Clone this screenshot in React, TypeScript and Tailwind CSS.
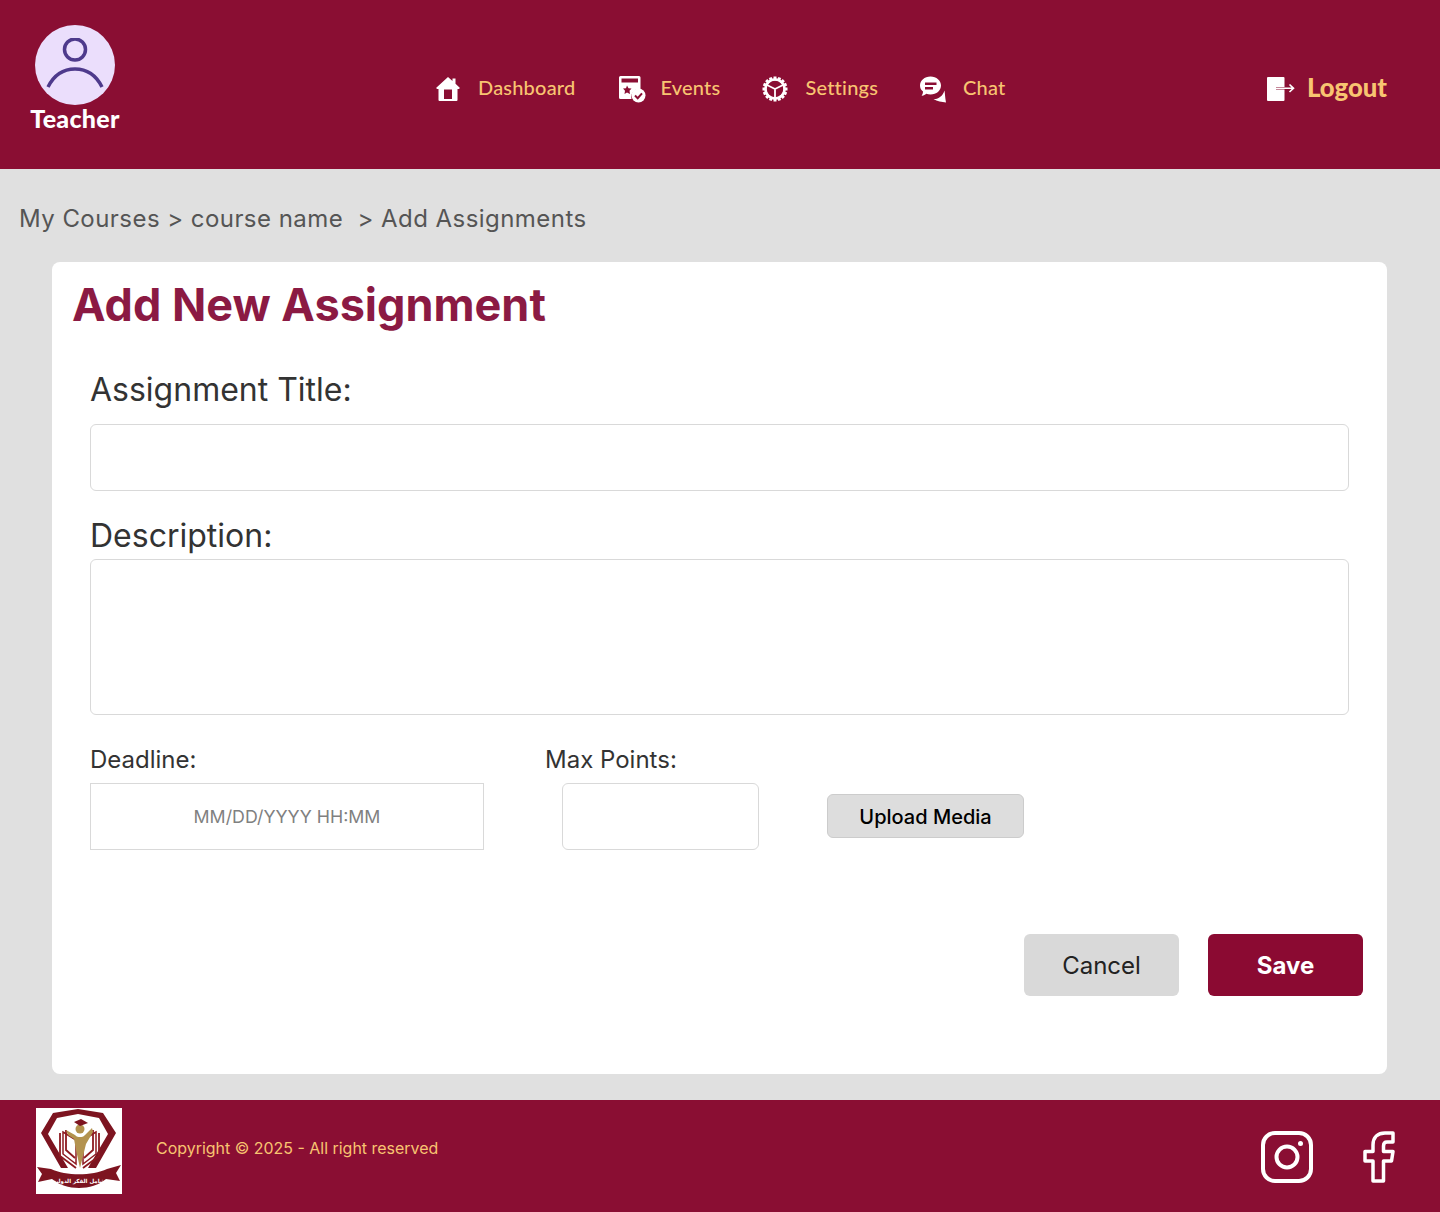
const HomeIcon = () => (
  <svg width="24" height="26" viewBox="0 0 24 26" className="shrink-0">
    <path fill="#fff" fillRule="evenodd" d="M12 1 L16.500 5 V2.500 H19.500 V7.800 L24 12 L22.800 13 H21.500 V24 Q21.500 25 20.500 25 H3.500 Q2.500 25 2.500 24 V13 H1.200 L0 12 Z M8 13.500 V23 H16 V13.500 Z" />
  </svg>
)

const EventsIcon = () => (
  <svg width="27" height="28" viewBox="0 0 27 28" className="shrink-0">
    <path fill="#fff" fillRule="evenodd" d="M1.500 1 H20 Q21.500 1 21.500 2.500 V14 A8 8 0 0 0 12.500 24 H1.500 Q0 24 0 22.500 V2.500 Q0 1 1.500 1 Z M2.500 3.500 V7.500 H19 V3.500 Z" />
    <path fill="#8a0e33" d="M8 10.500 L9.500 13.300 L12.500 13.500 L10.500 15.700 L11 19 L8 17.500 L5.500 19 L6 15.700 L4 13.500 L7 13.300 Z" />
    <circle cx="19.500" cy="20.500" r="7" fill="#fff" />
    <path d="M16 20.500 L18.700 23.200 L23 18.300" fill="none" stroke="#8a0e33" strokeWidth="2" />
  </svg>
)

const SettingsIcon = () => {
  const teeth = Array.from({ length: 16 }, (_, i) => i * 22.5)
  return (
    <svg width="26" height="26" viewBox="0 0 26 26" className="shrink-0">
      {teeth.map((a) => (
        <rect key={a} x="11.500" y="0.500" width="3" height="4" fill="#fff" transform={`rotate(${a} 13 13)`} />
      ))}
      <circle cx="13" cy="13" r="9.500" fill="none" stroke="#fff" strokeWidth="2.500" />
      <path d="M13 13 L5 9 M13 13 L21 9 M13 13 V22" stroke="#fff" strokeWidth="1.800" />
    </svg>
  )
}

const ChatIcon = () => (
  <svg width="27" height="27" viewBox="0 0 27 27" className="shrink-0">
    <path fill="#fff" fillRule="evenodd" d="M10.500 0.500 C16.500 0.500 21 4.500 21 9.500 C21 14.500 16.500 18.500 10.500 18.500 C9 18.500 7.500 18.200 6.200 17.800 C4.800 19 3 20 1.500 19.500 C2.500 18.500 3 17 3 15.500 C1 14 0 12 0 9.500 C0 4.500 4.500 0.500 10.500 0.500 Z M5 6.500 V9 H16.500 V6.500 Z M5 11 V13.500 H13 V11 Z" />
    <path fill="#fff" d="M24.500 14.500 C25 17 25 21 26 26.500 C22 26 17 25.500 13.500 23 C18 23.500 22.500 20.500 24.500 14.500 Z" />
  </svg>
)

const LogoutIcon = () => (
  <svg width="28" height="24" viewBox="0 0 28 24" className="shrink-0">
    <path fill="#fff" d="M0 1 Q0 0 1 0 H16.500 Q17.500 0 17.500 1 V10 H9 V12.500 H17.500 V23 Q17.500 24 16.500 24 H1 Q0 24 0 23 Z" />
    <path d="M9 11.300 H26 M22.500 7.500 L26.500 11.300 L22.500 15" fill="none" stroke="#fff" strokeWidth="1.600" />
  </svg>
)

const InstagramIcon = () => (
  <svg width="52" height="52" viewBox="0 0 52 52">
    <rect x="2" y="2" width="48" height="48" rx="12" fill="none" stroke="#fff" strokeWidth="4" />
    <circle cx="26" cy="26" r="10.500" fill="none" stroke="#fff" strokeWidth="4" />
    <circle cx="39.500" cy="12.500" r="2.500" fill="#fff" />
  </svg>
)

const FacebookIcon = () => (
  <svg width="32" height="52" viewBox="0 0 32 52">
    <path
      d="M10 50 V30 H2 V20.500 H10 V14 C10 6 15 2 22 2 H30 V11 H24 C21.500 11 20.500 12.500 20.500 15 V20.500 H30 L28.500 30 H20.500 V50 Z"
      fill="none"
      stroke="#fff"
      strokeWidth="3.500"
      strokeLinejoin="round"
    />
  </svg>
)

const CrestLogo = () => (
  <svg width="86" height="86" viewBox="0 0 86 86" className="shrink-0 bg-white">
    {/* shield */}
    <path d="M17 5 L42 1 L67 5 L80 25 L60 60 L52 60 L72 26 L63 10 L42 6 L21 10 L12 26 L32 60 L25 60 L5 25 Z" fill="#7d1420" />
    {/* books */}
    <path d="M27 24 L40 32 V56 L27 46 Z M60 24 L47 32 V56 L60 46 Z" fill="#fff" stroke="#8d1a20" strokeWidth="1.500" />
    <path d="M24 25 V48 L40 60 M30 22 V42 L39 50 M63 25 V48 L47 60 M57 22 V42 L48 50" fill="none" stroke="#8d1a20" strokeWidth="1.800" />
    {/* graduate */}
    <path d="M30 22 L39 27 C41 29 42 29 44 29 C46 29 47 29 49 27 L56 20 L57 24 L50 36 L44 60 L40 42 L38 31 L32 27 Z" fill="#b3924e" />
    <circle cx="44" cy="21" r="4.500" fill="#b3924e" />
    <path d="M38 14 L45 11 L52 15 L44 18 Z" fill="#7d1420" />
    {/* ribbon */}
    <path d="M1 59 L15 61 C30 68 56 68 71 61 L85 57 L80 65 L84 73 L70 71 C56 83 30 83 16 71 L2 74 L6 66 Z" fill="#7d1420" />
    <text x="43" y="75" textAnchor="middle" fontSize="5.500" fontWeight="700" fill="#fff" fontFamily="'DejaVu Sans', sans-serif" direction="rtl">
      شامل الفكر الدولية
    </text>
  </svg>
)

const NavLink = ({ icon, label, gap }: { icon: React.ReactNode; label: string; gap: string }) => (
  <a className={`flex items-center ${gap}`}>
    {icon}
    <span className="mb-[4px] font-['Lato',sans-serif] text-[20px] font-medium leading-none tracking-[0.2px] text-[#f8c471]">{label}</span>
  </a>
)

export default function App() {
  return (
    <div className="flex min-h-[1212px] flex-col bg-[#e0e0e0] font-['Inter',sans-serif]">
      <header className="flex h-[169px] shrink-0 items-start bg-[#8a0e33] pl-[30px] pr-[53px]">
        <div className="mt-[25px] flex w-[90px] flex-col items-center">
          <div className="flex h-20 w-20 items-center justify-center rounded-full bg-[#ebdefc]">
            <svg width="58" height="54" viewBox="0 0 58 54">
              <circle cx="29" cy="11.500" r="10.500" fill="none" stroke="#4e3a8c" strokeWidth="3.500" />
              <path d="M2 49 C8 37 18 31 29 31 C40 31 50 37 56 49" fill="none" stroke="#4e3a8c" strokeWidth="3.500" />
            </svg>
          </div>
          <span className="whitespace-nowrap font-['Lato',sans-serif] text-[25px] font-black leading-[27px] tracking-[0.3px] text-white">Teacher</span>
        </div>

        <nav className="ml-[316px] mt-[75px] flex items-center">
          <NavLink icon={<HomeIcon />} label="Dashboard" gap="gap-[18px]" />
          <div className="ml-[44px]"><NavLink icon={<EventsIcon />} label="Events" gap="gap-[14px]" /></div>
          <div className="ml-[42px]"><NavLink icon={<SettingsIcon />} label="Settings" gap="gap-[17px]" /></div>
          <div className="ml-[42px]"><NavLink icon={<ChatIcon />} label="Chat" gap="gap-[16px]" /></div>
        </nav>

        <a className="ml-auto mt-[75px] flex items-center gap-3">
          <LogoutIcon />
          <span className="mb-[2px] font-['Lato',sans-serif] text-[25.7px] font-black leading-none text-[#f8c471]">Logout</span>
        </a>
      </header>

      <main className="flex-1 pt-[34px]">
        <div className="pl-[19px] text-[24px] leading-[32px] tracking-[0.45px] text-[#555555]">
          My Courses &gt; course name &nbsp;&gt; Add Assignments
        </div>

        <section className="ml-[52px] mt-[27px] flex h-[812px] w-[1335px] flex-col rounded-lg bg-white">
          <h1 className="ml-[20px] mt-[15px] text-[45px] font-bold leading-[56px] text-[#8b1a43]">Add New Assignment</h1>

          <div className="mx-[38px] mt-[38px] flex flex-col">
            <label className="text-[32px] leading-[38px] text-[#333333]">Assignment Title:</label>
            <div className="mt-[15px] h-[67px] rounded-md border border-[#d9d9d9]" />

            <label className="mt-[26px] text-[32px] leading-[38px] text-[#333333]">Description:</label>
            <div className="mt-[4px] h-[156px] rounded-md border border-[#d9d9d9]" />

            <div className="mt-[30px] flex items-start">
              <div className="w-[395px]">
                <label className="block text-[24px] leading-[30px] text-[#333333]">Deadline:</label>
                <div className="mt-[8px] flex h-[67px] w-[394px] items-center justify-center border border-[#d9d9d9] pt-[2px] text-[17.8px] text-[#808080]">
                  MM/DD/YYYY HH:MM
                </div>
              </div>
              <div className="ml-[60px] w-[215px]">
                <label className="block text-[24px] leading-[30px] text-[#333333]">Max Points:</label>
                <div className="ml-[17px] mt-[8px] h-[67px] w-[197px] rounded-md border border-[#d9d9d9]" />
              </div>
              <button className="ml-[67px] mt-[49px] h-[44px] w-[197px] rounded-md border border-[#cccccc] bg-[#dddddd] pt-px text-[20px] font-medium text-black">
                Upload Media
              </button>
            </div>
          </div>

          <div className="mr-[24px] mt-[84px] flex justify-end gap-[29px]">
            <button className="h-[62px] w-[155px] rounded-md bg-[#d9d9d9] pt-[2px] text-[24px] text-[#222222]">Cancel</button>
            <button className="h-[62px] w-[155px] rounded-md bg-[#8b0a32] pt-[2px] text-[24px] font-bold text-white">Save</button>
          </div>
        </section>
      </main>

      <footer className="flex h-[112px] shrink-0 items-start bg-[#8a0e33] pl-[36px] pr-[45px] pt-[8px]">
        <CrestLogo />
        <span className="ml-[34px] mt-[31px] text-[15.96px] leading-[20px] text-[#f8c471]">Copyright © 2025 - All right reserved</span>
        <div className="ml-auto mt-[23px] flex items-center gap-[50px]">
          <InstagramIcon />
          <FacebookIcon />
        </div>
      </footer>
    </div>
  )
}
